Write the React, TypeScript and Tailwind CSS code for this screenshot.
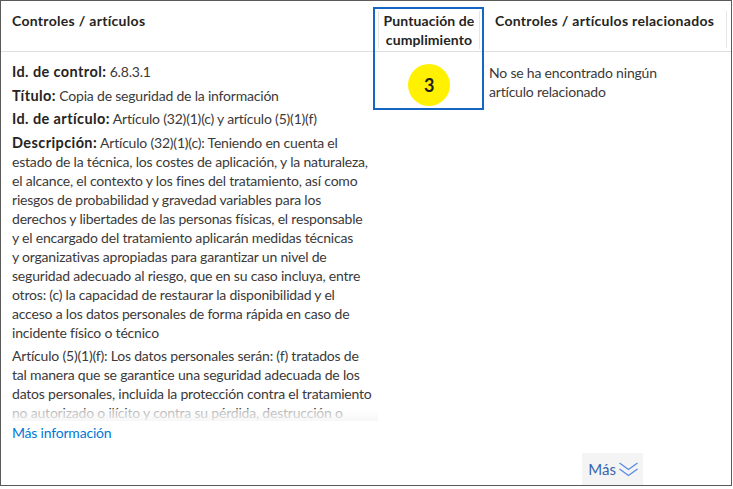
const descLines = [
    'estado de la técnica, los costes de aplicación, y la naturaleza,',
    'el alcance, el contexto y los fines del tratamiento, así como',
    'riesgos de probabilidad y gravedad variables para los',
    'derechos y libertades de las personas físicas, el responsable',
    'y el encargado del tratamiento aplicarán medidas técnicas',
    'y organizativas apropiadas para garantizar un nivel de',
    'seguridad adecuado al riesgo, que en su caso incluya, entre',
    'otros: (c) la capacidad de restaurar la disponibilidad y el',
    'acceso a los datos personales de forma rápida en caso de',
    'incidente físico o técnico',
];

const art5Lines = [
    'Artículo (5)(1)(f): Los datos personales serán: (f) tratados de',
    'tal manera que se garantice una seguridad adecuada de los',
    'datos personales, incluida la protección contra el tratamiento',
    'no autorizado o ilícito y contra su pérdida, destrucción o',
];

const Label = ({ children }: { children: string }) => (
    <span className="font-bold text-[14.5px] tracking-[0.4px] text-[#252423]">{children}</span>
);

const Field = ({ label, value }: { label: string; value: string }) => (
    <p className="whitespace-nowrap">
        <Label>{label}</Label> {value}
    </p>
);

export default function App() {
    return (
        <div className="w-[733px] h-[489px] bg-white font-['Lato','Liberation_Sans',sans-serif] text-[14px] leading-[19px] text-[#3b3a39]">
            <div className="relative w-[732px] h-[486px] border border-[#5a5a5a] flex flex-col">
                {/* header */}
                <div className="h-[51px] shrink-0 grid grid-cols-[377px_102px_1fr] border-b border-[#e1dfdd] font-bold tracking-[0.3px] text-[#252423]">
                    <div className="pl-[11px] pt-[10px]">Controles / artículos</div>
                    <div className="my-[10px] border-x border-[#e6e6e6] text-center leading-[19px] tracking-[0.1px]">
                        Puntuación de
                        <br />
                        cumplimiento
                    </div>
                    <div className="flex justify-between pl-[15px] pr-[4px] pt-[10px]">
                        <span>Controles / artículos relacionados</span>
                        <span className="h-[37px] w-px bg-[#e6e6e6]" />
                    </div>
                </div>

                {/* body */}
                <div className="flex-1 grid grid-cols-[377px_102px_1fr] tracking-[-0.2px]">
                    <div className="pl-[11px] pt-[10px]">
                        <div className="relative h-[359px] overflow-hidden">
                            <div className="flex flex-col gap-[4.5px]">
                                <Field label="Id. de control:" value="6.8.3.1" />
                                <Field label="Título:" value="Copia de seguridad de la información" />
                                <Field label="Id. de artículo:" value="Artículo (32)(1)(c) y artículo (5)(1)(f)" />
                                <p className="whitespace-nowrap">
                                    <Label>Descripción:</Label> Artículo (32)(1)(c): Teniendo en cuenta el
                                    {descLines.map((l) => (
                                        <span key={l} className="block">{l}</span>
                                    ))}
                                </p>
                                <p className="whitespace-nowrap">
                                    {art5Lines.map((l) => (
                                        <span key={l} className="block">{l}</span>
                                    ))}
                                </p>
                            </div>
                            <div className="absolute inset-x-0 bottom-0 h-[12px] bg-gradient-to-b from-white/60 to-[#f6f6f6]/90" />
                        </div>
                        <a href="#" className="mt-[2px] block text-[#0078d4]">Más información</a>
                    </div>
                    <div className="flex justify-center pt-[12px]">
                        <div className="w-[42px] h-[42px] rounded-full bg-[#fff100] flex items-center justify-center font-bold text-[18px] text-[#201f1e]">
                            3
                        </div>
                    </div>
                    <div className="pl-[9px] pt-[11px]">
                        No se ha encontrado ningún
                        <br />
                        artículo relacionado
                    </div>
                </div>

                {/* footer */}
                <div className="flex justify-end pr-[88px]">
                    <button className="h-[32px] pl-[6px] pr-[4px] bg-[#f4f4f4] flex items-center gap-[2px] text-[15px] text-[#3864ad]">
                        Más
                        <svg width="21" height="18" viewBox="0 0 21 18" fill="none" stroke="#5a8be0" strokeWidth="1.3">
                            <path d="M1.5 3l9 6.5 9-6.5" />
                            <path d="M1.5 9l9 6.5 9-6.5" />
                        </svg>
                    </button>
                </div>

                {/* highlighted column */}
                <div className="absolute left-[372px] top-[6px] w-[111px] h-[103px] border-2 border-[#1466c2]" />
            </div>
        </div>
    );
}
